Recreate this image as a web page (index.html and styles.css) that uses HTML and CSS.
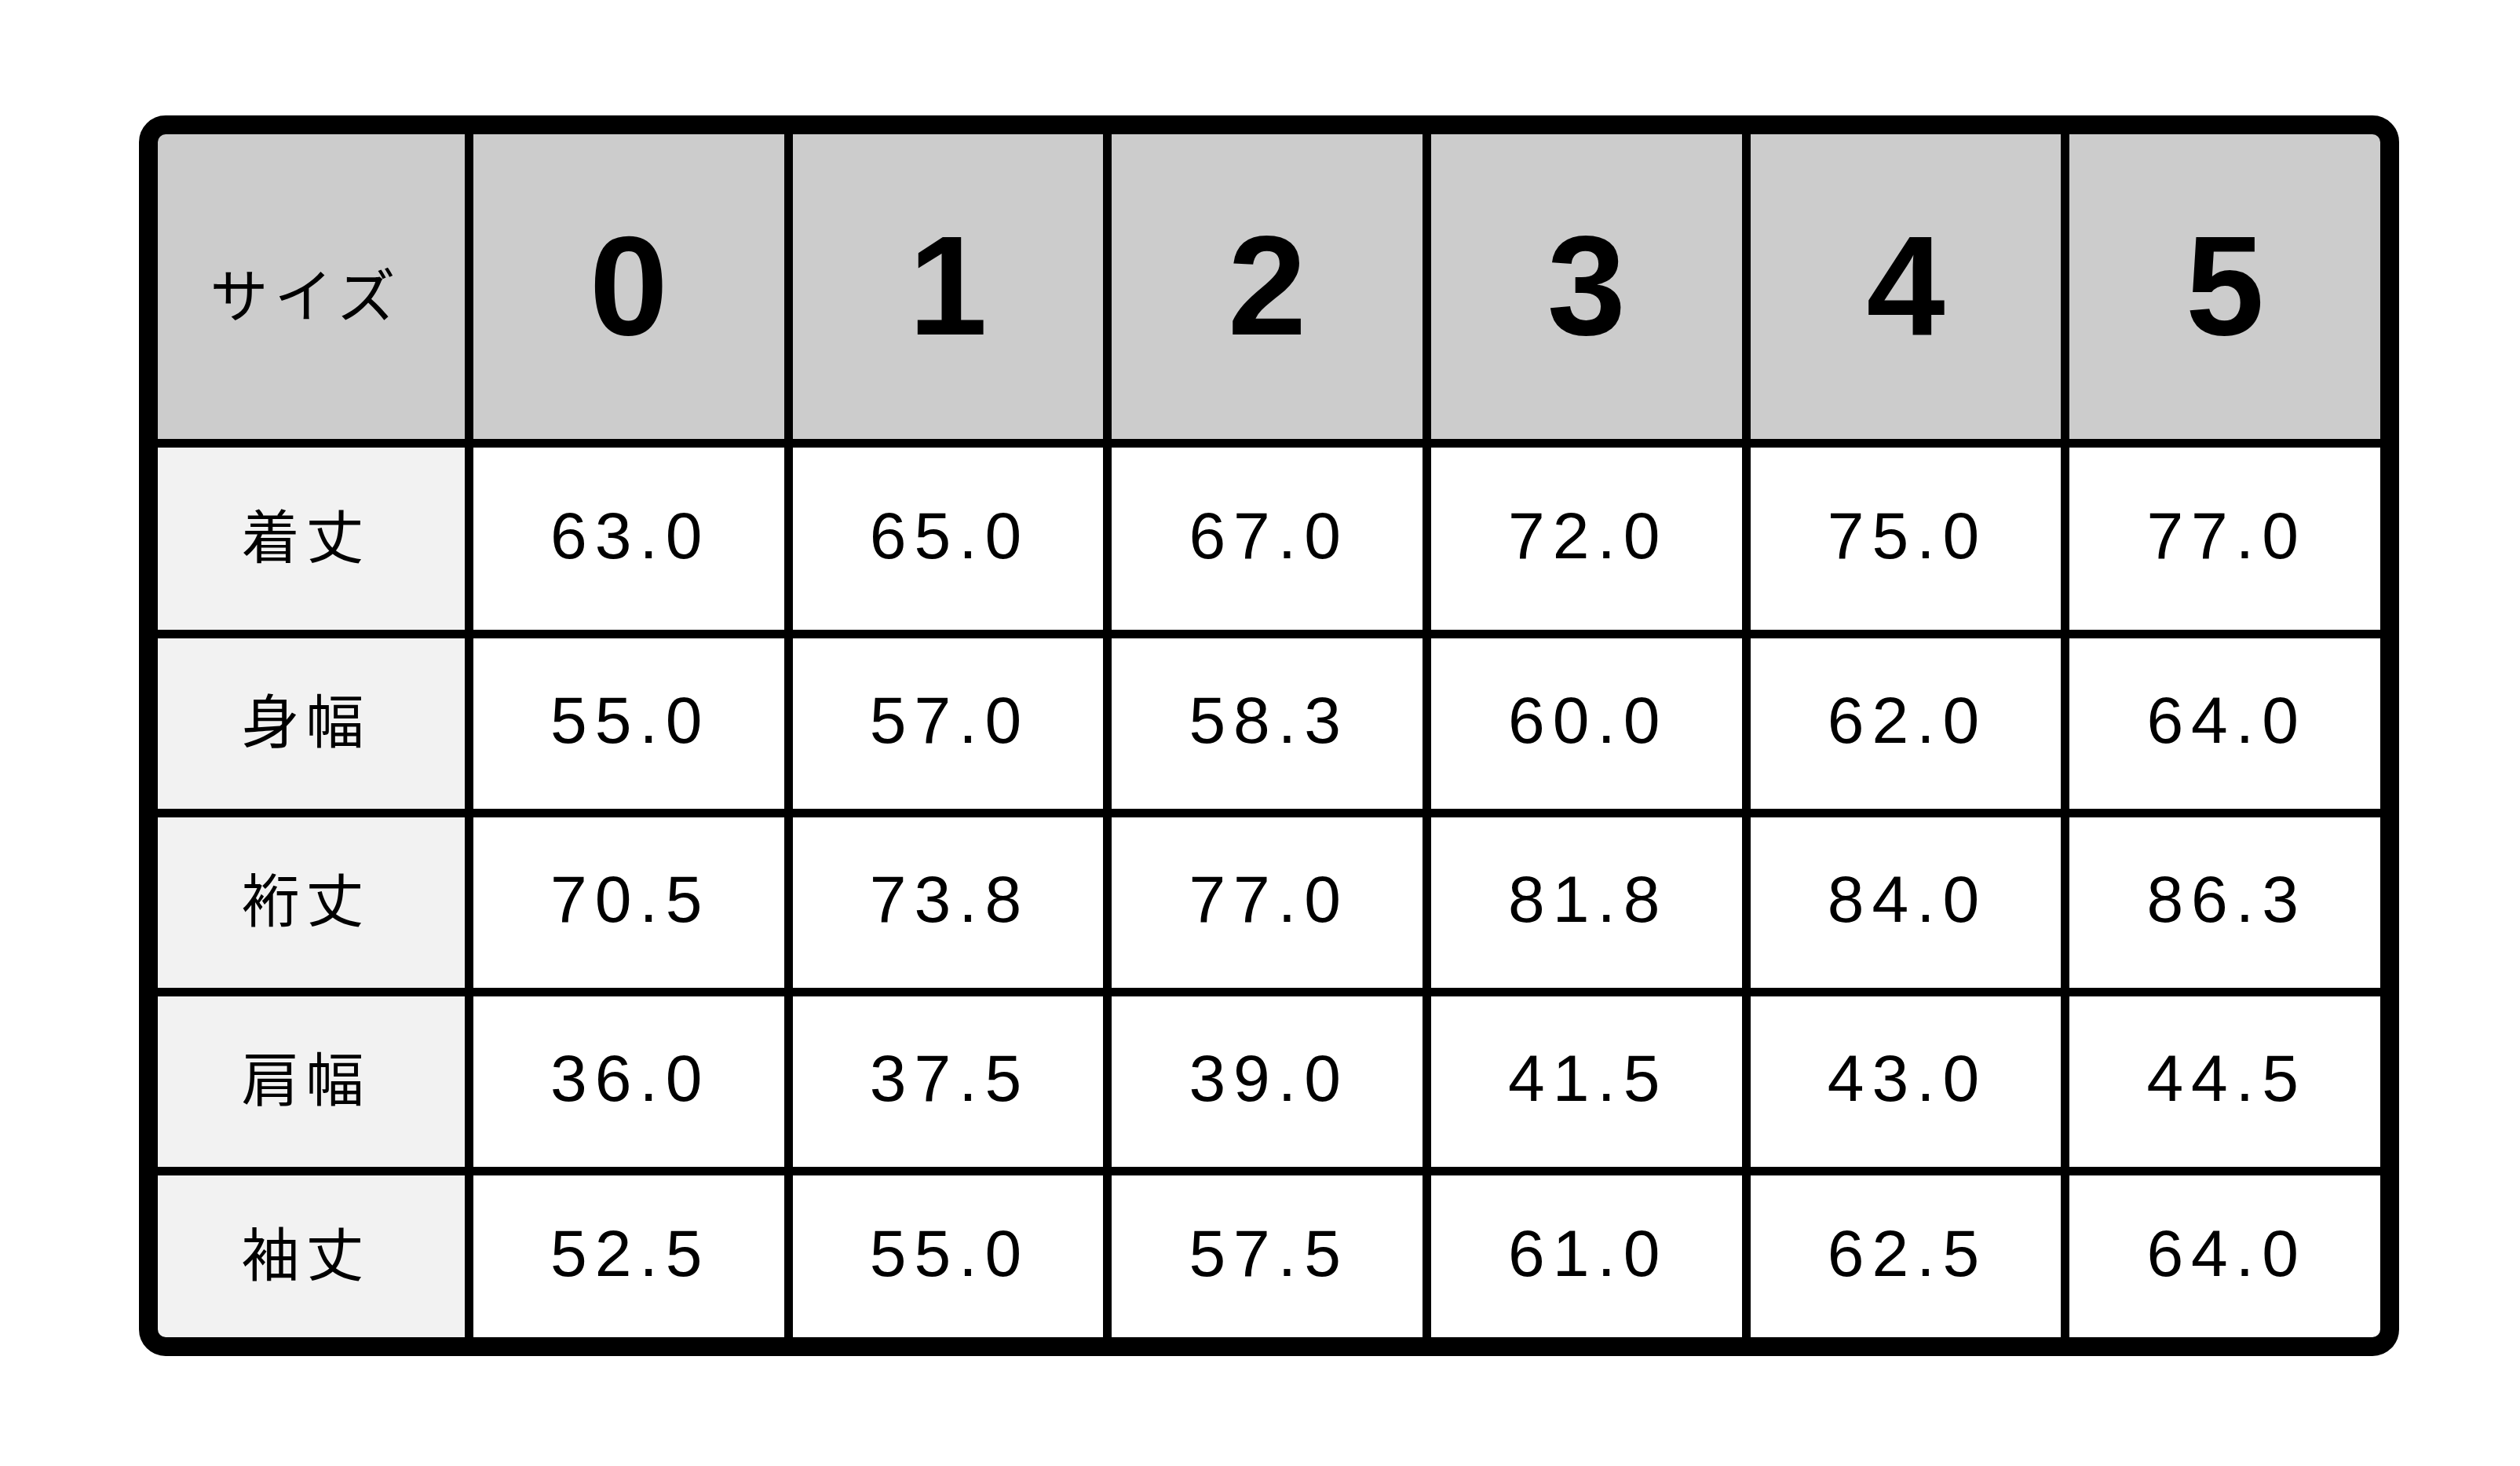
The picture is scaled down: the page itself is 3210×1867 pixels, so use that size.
FILE: index.html
```html
<!DOCTYPE html>
<html lang="ja">
<head>
    <meta charset="UTF-8">
    <meta name="viewport" content="width=device-width, initial-scale=1.0">
    <title>サイズ表</title>
    <link rel="stylesheet" href="styles.css">
</head>
<body>
    <div class="size-table">
        <div class="cell head label">サイズ</div>
        <div class="cell head">0</div>
        <div class="cell head">1</div>
        <div class="cell head">2</div>
        <div class="cell head">3</div>
        <div class="cell head">4</div>
        <div class="cell head">5</div>

        <div class="cell label">着丈</div>
        <div class="cell">63.0</div>
        <div class="cell">65.0</div>
        <div class="cell">67.0</div>
        <div class="cell">72.0</div>
        <div class="cell">75.0</div>
        <div class="cell">77.0</div>

        <div class="cell label">身幅</div>
        <div class="cell">55.0</div>
        <div class="cell">57.0</div>
        <div class="cell">58.3</div>
        <div class="cell">60.0</div>
        <div class="cell">62.0</div>
        <div class="cell">64.0</div>

        <div class="cell label">裄丈</div>
        <div class="cell">70.5</div>
        <div class="cell">73.8</div>
        <div class="cell">77.0</div>
        <div class="cell">81.8</div>
        <div class="cell">84.0</div>
        <div class="cell">86.3</div>

        <div class="cell label">肩幅</div>
        <div class="cell">36.0</div>
        <div class="cell">37.5</div>
        <div class="cell">39.0</div>
        <div class="cell">41.5</div>
        <div class="cell">43.0</div>
        <div class="cell">44.5</div>

        <div class="cell label">袖丈</div>
        <div class="cell">52.5</div>
        <div class="cell">55.0</div>
        <div class="cell">57.5</div>
        <div class="cell">61.0</div>
        <div class="cell">62.5</div>
        <div class="cell">64.0</div>
    </div>
</body>
</html>
```

FILE: styles.css
```css
body {
    margin: 0;
    padding: 147px 0 0 177px;
    background: #fff;
    color: #000;
    font-family: 'Liberation Sans', 'Noto Sans CJK JP', sans-serif;
}
.size-table {
    width: 2831px;
    display: grid;
    grid-template-columns: 391px repeat(6, 1fr);
    grid-template-rows: 388px 232px 217px 217px 217px 206px;
    gap: 11px;
    background: #000;
    border: 24px solid #000;
    border-radius: 34px;
    overflow: hidden;
}
.cell {
    display: flex;
    align-items: center;
    justify-content: center;
    background: #fff;
    font-size: 84px;
    letter-spacing: 10px;
    padding: 0 0 8px 4px;
}
.cell.label {
    background: #f2f2f2;
    font-family: 'Noto Sans CJK JP', sans-serif;
    font-size: 74px;
    letter-spacing: 8px;
    padding: 0 14px 16px 0;
}
.cell.head {
    background: #ccc;
    font-size: 180px;
    font-weight: bold;
    letter-spacing: 0;
    padding: 0 0 4px 0;
}
.cell.head.label {
    font-size: 74px;
    font-weight: normal;
    letter-spacing: 8px;
    padding: 12px 14px 0 0;
}
```
